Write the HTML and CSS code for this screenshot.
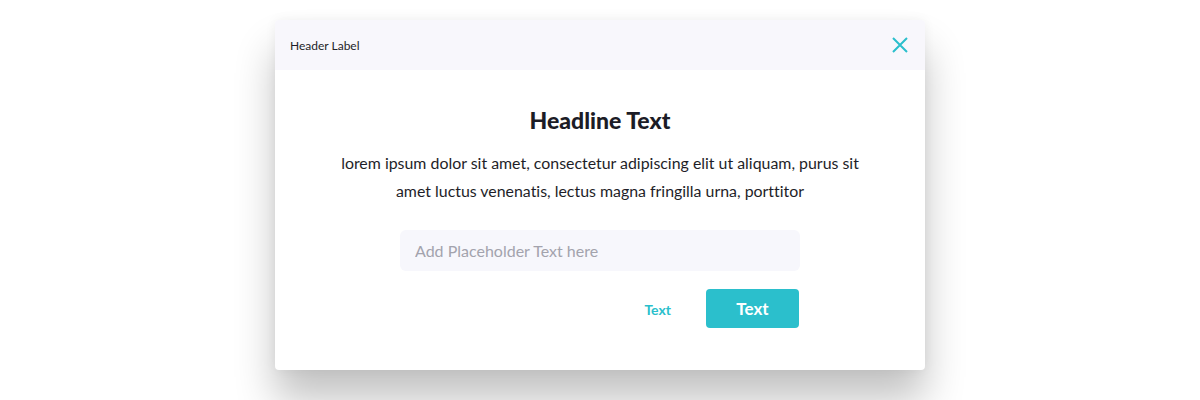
FILE: index.html
```html
<!DOCTYPE html>
<html>
<head>
<meta charset="utf-8">
<link rel="stylesheet" href="styles.css">
</head>
<body>
<div class="modal">
  <div class="modal-header">
    <span class="header-label">Header Label</span>
    <button class="close" aria-label="Close">
      <svg width="16" height="16" viewBox="0 0 16 16"><path d="M1 1 L15 15 M15 1 L1 15" stroke="#2bbfcc" stroke-width="2" fill="none"/></svg>
    </button>
  </div>
  <div class="modal-body">
    <h1 class="headline">Headline Text</h1>
    <p class="desc">lorem ipsum dolor sit amet, consectetur adipiscing elit ut aliquam, purus sit amet luctus venenatis, lectus magna fringilla urna, porttitor</p>
    <div class="form">
      <input class="field" type="text" placeholder="Add Placeholder Text here">
      <div class="actions">
        <button class="link-btn">Text</button>
        <button class="primary-btn">Text</button>
      </div>
    </div>
  </div>
</div>
</body>
</html>
```

FILE: styles.css
```css
html, body {
  margin: 0;
  padding: 0;
  background: #ffffff;
  font-family: Lato, "Open Sans", sans-serif;
  font-variant-ligatures: none;
}
html {
  height: 100%;
}
body {
  min-height: 400px;
  box-sizing: border-box;
  padding-top: 20px;
}
.modal {
  width: 650px;
  height: 350px;
  margin: 0 auto;
  background: #ffffff;
  border-radius: 4px;
  box-shadow: 0 30px 40px rgba(0, 0, 0, 0.24), 0 0 12px rgba(0, 0, 0, 0.05);
  overflow: hidden;
  display: flex;
  flex-direction: column;
}
.modal-header {
  height: 50px;
  flex: none;
  background: #f8f7fc;
  display: flex;
  align-items: center;
  justify-content: space-between;
  padding: 0 17px 0 15px;
}
.header-label {
  font-size: 12px;
  color: #1e1e28;
}
.close {
  border: 0;
  background: none;
  padding: 0;
  width: 16px;
  height: 16px;
  display: flex;
  cursor: pointer;
}
.modal-body {
  display: flex;
  flex-direction: column;
  align-items: center;
  padding-top: 35px;
}
.headline {
  margin: 0;
  font-size: 23px;
  line-height: 30px;
  font-weight: 900;
  color: #1c1c26;
}
.desc {
  margin: 14px 0 0;
  width: 530px;
  text-align: center;
  font-size: 15.9px;
  line-height: 28px;
  color: #1e1e28;
}
.form {
  width: 400px;
  margin-top: 25px;
  display: flex;
  flex-direction: column;
}
.field {
  box-sizing: border-box;
  width: 400px;
  height: 41px;
  border: 0;
  border-radius: 6px;
  background: #f7f7fc;
  padding: 0 15px;
  font-family: Lato, sans-serif;
  font-size: 16px;
  color: #1e1e28;
  outline: none;
}
.field::placeholder {
  color: #a3a3ad;
}
.actions {
  margin-top: 18px;
  display: flex;
  justify-content: flex-end;
  align-items: center;
  gap: 35px;
  padding-right: 1px;
}
.link-btn {
  border: 0;
  background: none;
  padding: 0;
  font-family: Lato, sans-serif;
  font-weight: 700;
  font-size: 14px;
  color: #2bbfcc;
  margin-top: 2px;
}
.primary-btn {
  width: 93px;
  height: 39px;
  border: 0;
  border-radius: 4px;
  background: #2bbfcc;
  color: #ffffff;
  font-family: Lato, sans-serif;
  font-weight: 700;
  font-size: 17px;
}
```
